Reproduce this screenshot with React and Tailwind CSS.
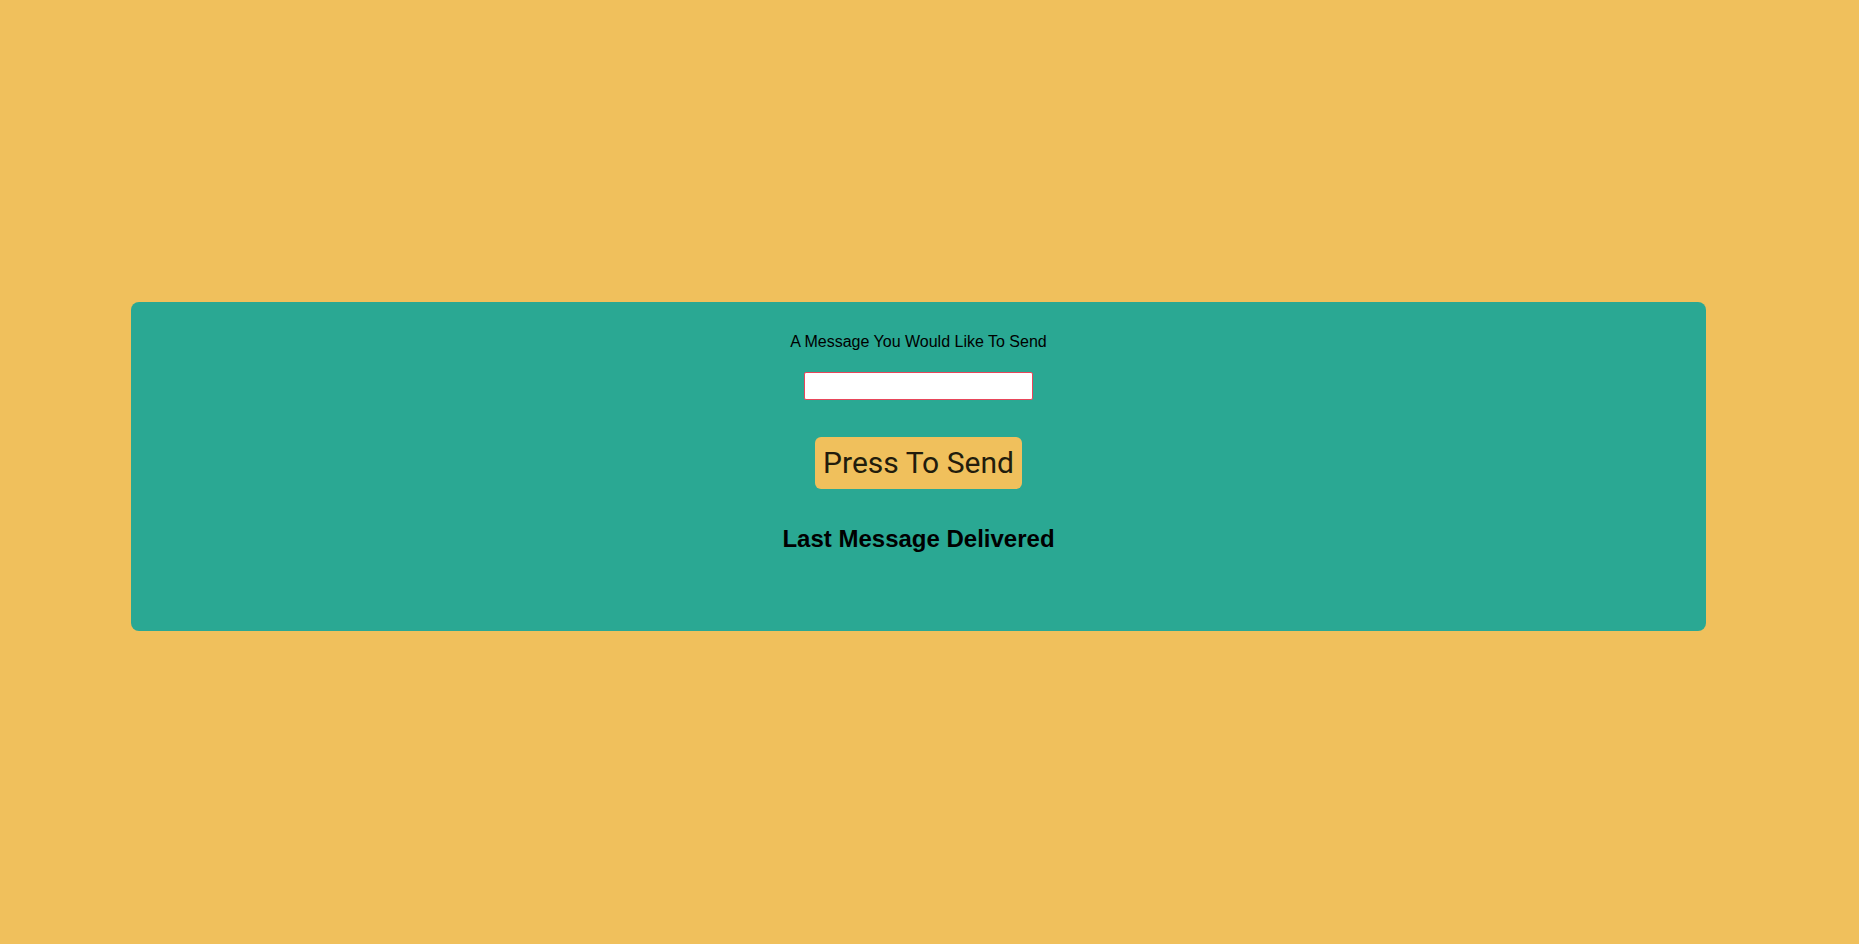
import React from "react";

export default function App() {
  return (
    <div className="w-[1859px] h-[944px] bg-[#f0c05c] pt-[302px]" style={{ fontFamily: '"Liberation Sans", Arial, sans-serif' }}>
      <div className="ml-[131px] w-[1575px] h-[329px] rounded-lg bg-[#2aa893] flex flex-col items-center pt-[31px]">
        <p className="text-[16px] leading-[18px] text-black">A Message You Would Like To Send</p>
        <input type="text" className="mt-[21px] w-[229px] h-[28px] bg-white border border-[#e8465a] rounded-[2px] outline-none" />
        <button className="mt-[37px] w-[207px] h-[52px] rounded-md bg-[#f0c05c] text-[#221c0c] text-[30px] leading-none whitespace-nowrap flex items-center justify-center" style={{ fontFamily: 'Roboto, "Liberation Sans", Arial, sans-serif' }}>
          Press To Send
        </button>
        <h2 className="mt-[36px] text-[24px] leading-[28px] font-bold text-black">Last Message Delivered</h2>
      </div>
    </div>
  );
}
